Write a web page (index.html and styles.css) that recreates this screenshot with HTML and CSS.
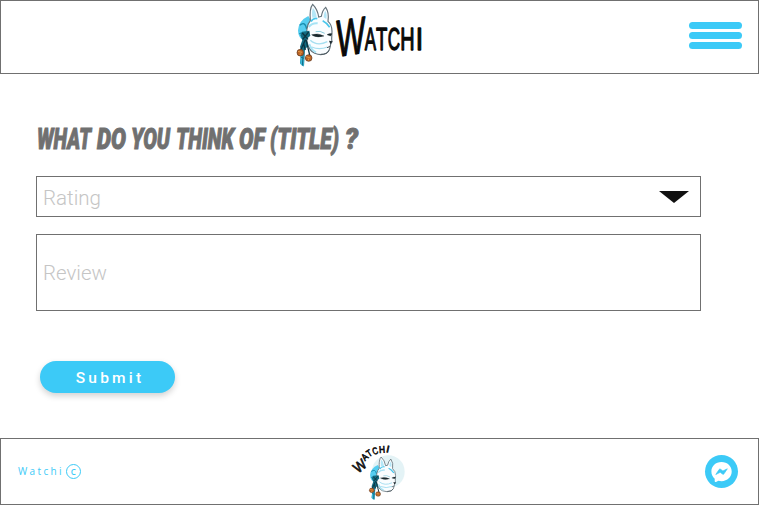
FILE: index.html
```html
<!DOCTYPE html>
<html lang="en">
<head>
<meta charset="utf-8">
<title>Watchi</title>
<link rel="stylesheet" href="styles.css">
</head>
<body>
<header class="header">
  <svg class="logo" viewBox="0 0 480 216" role="img" aria-label="Watchi">
    <defs>
      <g id="mask">
        <path d="M70 48Q41 62 39 91Q39 115 59 124Q88 105 89 80Z" fill="#55cdf0"/>
        <path d="M44 76Q60 62 65 87M43 102Q57 93 66 110" fill="none" stroke="#168aac" stroke-width="4"/>
        <path d="M76 62C74 38 77 20 83 13Q98 28 101 51L109 49Q112 31 122 22Q133 38 129 64Q141 74 141 94L140 117Q143 125 137 132Q134 155 124 160Q108 168 89 160Q72 152 66 126Q61 78 76 62Z" fill="#fafdff" stroke="#65737b" stroke-width="3.5"/>
        <path d="M82 53Q79 35 84 24Q94 35 95 53ZM116 52Q117 36 122 33Q127 44 124 57Z" fill="#b5e7f7"/>
        <path d="M78 65Q84 53 97 56M113 62Q124 67 134 82" fill="none" stroke="#48c6ec" stroke-width="5"/>
        <path d="M76 121Q97 140 127 125M80 141Q103 151 127 141" fill="none" stroke="#a5def0" stroke-width="4"/>
        <path d="M71 81Q82 68 98 70M73 132Q79 151 93 157" fill="none" stroke="#a7e3f5" stroke-width="6"/>
        <path d="M80 104Q99 98 117 108Q98 114 84 107ZM126 104Q134 99 141 101L137 108Z" fill="#17262c" stroke="#17262c" stroke-width="1"/>
        <path d="M92 95Q105 91 119 100" fill="none" stroke="#8acbdc" stroke-width="3"/>
        <path d="M132 122L143 124L136 133Z" fill="#202b30"/>
        <path d="M126 143L136 139M107 163Q126 164 132 151" fill="none" stroke="#4b575e" stroke-width="3"/>
        <path d="M51 95L73 92L76 107L64 118L70 137L60 148L57 198L45 190L49 158L45 140L52 120L46 106Z" fill="#146b81"/>
        <path d="M52 99L69 118M71 96L53 118M61 119L47 151M63 119L75 169M56 132L61 150" fill="none" stroke="#0b3542" stroke-width="4"/>
        <path d="M47 157L58 151L56 200L46 192Z" fill="#38b9d9"/>
        <path d="M55 155L52 197M47 171L57 175" fill="none" stroke="#126b86" stroke-width="3"/>
        <circle cx="46" cy="158" r="10" fill="#b96224" stroke="#5a351f" stroke-width="2"/>
        <circle cx="71" cy="174" r="10" fill="#b96224" stroke="#5a351f" stroke-width="2"/>
        <path d="M39 154L51 157M64 170L76 174M46 160L45 165M71 176L70 181" fill="none" stroke="#e59a47" stroke-width="3"/>
      </g>
    </defs>
    <use href="#mask"/>
    <g class="wordmark">
      <text class="brand-w" transform="translate(154 171) skewY(-9)" textLength="87" lengthAdjust="spacingAndGlyphs">W</text>
      <g class="brand-rest">
        <text x="239" y="150" textLength="34" lengthAdjust="spacingAndGlyphs">A</text>
        <text x="273" y="150" textLength="34" lengthAdjust="spacingAndGlyphs">T</text>
        <text x="308" y="150" textLength="37" lengthAdjust="spacingAndGlyphs">C</text>
        <text x="346" y="150" textLength="43" lengthAdjust="spacingAndGlyphs">H</text>
        <text x="392" y="150" textLength="22" lengthAdjust="spacingAndGlyphs">I</text>
      </g>
    </g>
  </svg>
  <button class="menu" aria-label="Menu"><i></i><i></i><i></i></button>
</header>
<main class="main">
  <h1 class="title">
    <svg class="title-art" viewBox="0 0 330 40">
      <text x="1" y="34" textLength="54" lengthAdjust="spacingAndGlyphs">WHAT</text>
      <text x="61" y="34" textLength="29" lengthAdjust="spacingAndGlyphs">DO</text>
      <text x="95" y="34" textLength="39" lengthAdjust="spacingAndGlyphs">YOU</text>
      <text x="140" y="34" textLength="58" lengthAdjust="spacingAndGlyphs">THINK</text>
      <text x="203" y="34" textLength="26" lengthAdjust="spacingAndGlyphs">OF</text>
      <text x="234" y="34" textLength="69" lengthAdjust="spacingAndGlyphs">(TITLE)</text>
      <text x="309" y="34" textLength="13" lengthAdjust="spacingAndGlyphs">?</text>
    </svg>
  </h1>
  <div class="field rating">
    <svg class="placeholder" viewBox="0 0 70 38"><text x="0" y="26.5" textLength="58" lengthAdjust="spacingAndGlyphs">Rating</text></svg>
    <svg class="arrow" viewBox="0 0 30 12"><path d="M0 0H30L15 12Z"/></svg>
  </div>
  <div class="field review">
    <svg class="placeholder" viewBox="0 0 70 38"><text x="0" y="25.5" textLength="64" lengthAdjust="spacingAndGlyphs">Review</text></svg>
  </div>
  <button class="submit">Submit</button>
</main>
<footer class="footer">
  <div class="copyright"><span>Watchi</span><span class="mark">C</span></div>
  <svg class="badge" viewBox="0 0 240 192" role="img" aria-label="Watchi">
    <circle cx="145" cy="98" r="49" fill="#e4f3f6"/>
    <use href="#mask" transform="translate(61 45) scale(.75 .69)"/>
    <g class="badge-text">
      <text class="badge-w" transform="translate(54 104) rotate(-38)" textLength="37" lengthAdjust="spacingAndGlyphs">W</text>
      <text transform="translate(75 67) rotate(-43)" textLength="16" lengthAdjust="spacingAndGlyphs">A</text>
      <text transform="translate(87 55) rotate(-33)" textLength="14" lengthAdjust="spacingAndGlyphs">T</text>
      <text transform="translate(101 48) rotate(-20)" textLength="16" lengthAdjust="spacingAndGlyphs">C</text>
      <text transform="translate(118 42) rotate(-4)" textLength="18" lengthAdjust="spacingAndGlyphs">H</text>
      <text transform="translate(137 39) rotate(12)" textLength="9" lengthAdjust="spacingAndGlyphs">I</text>
    </g>
  </svg>
  <svg class="messenger" viewBox="0 0 33 33" role="img" aria-label="Messenger">
    <circle cx="16.5" cy="16.5" r="16.5" fill="#3ccaf7"/>
    <path d="M16.5 7C10.6 7 6.4 11.1 6.4 16.6C6.4 19.6 7.6 22 9.7 23.7V26.2Q9.8 27.3 11 26.9L13.4 25.8Q14.9 26.2 16.5 26.2C22.4 26.2 26.7 22.1 26.7 16.6S22.4 7 16.5 7Z" fill="#fff"/>
    <path d="M10.8 19.5L14.1 14.5Q14.7 13.6 15.6 14.3L17.9 16L22.3 13.8L19 18.8Q18.4 19.7 17.5 19L15.2 17.3Z" fill="#3ccaf7" stroke="#3ccaf7" stroke-width=".7" stroke-linejoin="round"/>
  </svg>
</footer>
</body>
</html>
```

FILE: styles.css
```css
* { box-sizing: border-box; }
body {
  margin: 0;
  height: 505px;
  display: flex;
  flex-direction: column;
  background: #fff;
  overflow: hidden;
}
svg { display: block; overflow: visible; }
button { border: 0; padding: 0; font: inherit; }
.header, .footer {
  flex: none;
  display: grid;
  border: 1px solid #707070;
}
.header {
  height: 74px;
  grid-template-columns: 284px 160px 1fr;
}
.logo { grid-column: 2; width: 160px; height: 72px; margin-top: -1px; }
.wordmark { font-family: "Liberation Sans", sans-serif; fill: #090909; stroke: #090909; stroke-linejoin: bevel; }
.brand-w { font-size: 156px; stroke-width: 4px; }
.brand-rest { font-size: 94px; stroke-width: 4px; }
.menu {
  justify-self: end;
  display: flex;
  flex-direction: column;
  gap: 3px;
  width: 53px;
  margin: 21px 16px 0 0;
  background: none;
}
.menu i { width: 100%; height: 7px; border-radius: 4px; background: #3ccaf7; }
.main { flex: none; height: 364px; padding: 41px 58px 0 36px; }
.title { margin: 0; height: 61px; }
.title-art { width: 330px; height: 40px; }
.title-art text {
  font: italic 900 29.5px Roboto, sans-serif;
  fill: #707070;
  stroke: #707070;
  stroke-width: 1px;
}
.field {
  display: flex;
  align-items: center;
  justify-content: space-between;
  border: 1px solid #707070;
  padding: 0 11px 0 6px;
}
.rating { height: 41px; }
.review { height: 77px; margin-top: 17px; }
.placeholder { width: 70px; height: 38px; }
.placeholder text { font: 300 21px Roboto, sans-serif; fill: #c5c5c5; }
.arrow { width: 30px; height: 12px; fill: #111; }
.submit {
  display: block;
  width: 135px;
  height: 32px;
  margin: 50px 0 0 4px;
  padding: 2px 0 0 5px;
  border-radius: 16px;
  background: #3ccaf7;
  box-shadow: 0 3px 6px rgba(0, 0, 0, .18);
  color: #fff;
  font: 500 15.5px Roboto, sans-serif;
  letter-spacing: 3.2px;
}
.footer {
  height: 67px;
  grid-template-columns: 339px 80px 1fr;
}
.copyright {
  display: flex;
  align-items: center;
  gap: 2px;
  padding-left: 17px;
  color: #3ccaf7;
  font: 10px "Open Sans", sans-serif;
  letter-spacing: 2.35px;
}
.copyright span:first-child { margin-top: -1px; }
.mark {
  width: 15px;
  height: 15px;
  border: 1px solid #3ccaf7;
  border-radius: 50%;
  font-size: 8px;
  font-weight: 600;
  line-height: 13px;
  letter-spacing: 0;
  text-align: center;
}
.badge { width: 80px; height: 64px; }
.badge-text { font-family: "Liberation Sans", sans-serif; font-size: 29px; fill: #101010; stroke: #101010; stroke-width: 2px; }
.badge-w { font-size: 44px; }
.messenger { justify-self: end; width: 33px; height: 33px; margin: 16px 20px 0 0; }
```
